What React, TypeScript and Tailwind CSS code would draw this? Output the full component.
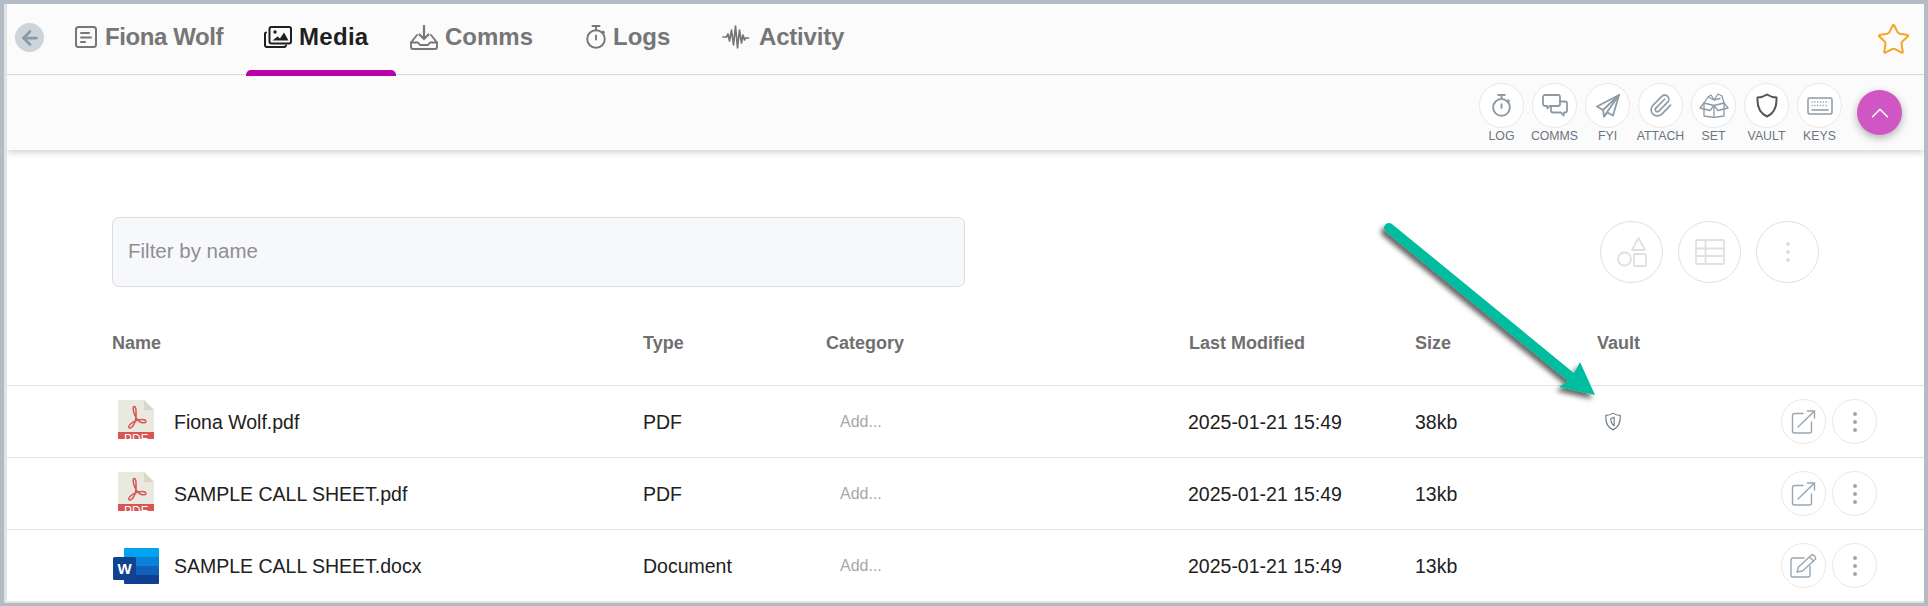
import { ArrowLeft, ChevronUp, Paperclip, Star } from "lucide-react";
import type { ReactNode } from "react";

const sans = "font-['Liberation_Sans',Arial,sans-serif]";

function Svg({ w, h, vb, sw = 2, children }: { w: number; h: number; vb?: string; sw?: number; children: ReactNode }) {
  return (
    <svg width={w} height={h} viewBox={vb ?? `0 0 ${w} ${h}`} fill="none" stroke="currentColor" strokeWidth={sw} strokeLinecap="round" strokeLinejoin="round">
      {children}
    </svg>
  );
}

function DocIcon() {
  return (
    <Svg w={22} h={22}>
      <rect x="1" y="1" width="20" height="20" rx="2.5" />
      <path d="M6 7h8M6 11.5h10M6 16h4" />
    </Svg>
  );
}

function MediaIcon() {
  return (
    <Svg w={28} h={22} sw={2}>
      <path d="M2 6.5A1.5 1.5 0 0 0 1 8v11a2 2 0 0 0 2 2h17a2 2 0 0 0 2-1.5" />
      <rect x="5.5" y="1" width="21.5" height="16.5" rx="2" />
      <circle cx="11" cy="6" r="1.7" fill="currentColor" stroke="none" />
      <path d="M8.5 14.5l5-4 2.5 2 4-6 4.500 8z" fill="currentColor" stroke="none" />
    </Svg>
  );
}

function InboxIcon() {
  return (
    <Svg w={28} h={25} sw={1.9}>
      <path d="M14 1v13M9.500 9.500l4.500 4.500 4.500-4.500" strokeWidth="2.200" />
      <path d="M7 10l-6 7.500V22a2 2 0 0 0 2 2h22a2 2 0 0 0 2-2v-4.500L21 10" />
      <path d="M1 17.500h7l2 2.500h8l2-2.500h7" />
    </Svg>
  );
}

function StopwatchIcon({ w = 20, h = 24, sw = 1.9 }: { w?: number; h?: number; sw?: number }) {
  return (
    <Svg w={w} h={h} vb="0 0 20 24" sw={sw}>
      <circle cx="10" cy="14" r="8.800" />
      <path d="M6.500 1h7M10 1v4M17 6.500l1 1" />
      <path d="M10 10.500v4" />
    </Svg>
  );
}

function Waveform() {
  return (
    <Svg w={30} h={24} sw={1.7}>
      <path d="M1 12h3.500l1.500-3 1.500 7 2-11 2 15 2-19 2 22 2-18 2 13 1.500-8 1.500 5 1-2h3" />
    </Svg>
  );
}

function CommentsIcon() {
  return (
    <Svg w={26} h={24} sw={1.8}>
      <path d="M3 1h13a2 2 0 0 1 2 2v7a2 2 0 0 1-2 2H7.500l-2 2.500-.5-2.500H3a2 2 0 0 1-2-2V3a2 2 0 0 1 2-2z" />
      <path d="M18 7.500h5a2 2 0 0 1 2 2v7a2 2 0 0 1-2 2h-1l-.5 3-2.500-3h-8a2 2 0 0 1-2-2V12" />
    </Svg>
  );
}

function PlaneIcon() {
  return (
    <Svg w={24} h={24} sw={1.8}>
      <path d="M23 1L1 12.500l6 3.500 1 6.500 3.500-4 5.500 3z" />
      <path d="M23 1L7 16M23 1L8 22.500" />
    </Svg>
  );
}

function BoxIcon() {
  return (
    <Svg w={30} h={25} sw={1.3}>
      <path d="M5 10v13l10 1.500 10-1.500V10" />
      <path d="M5 10l10 2.500L25 10M15 12.500v12" />
      <path d="M5 10L1 15l10 2.500 4-5 4 5L29 15l-4-5" />
      <path d="M5 10l4-6 6 3 6-1.500M15 7l-3-5-3 2M15 7l4-6 4 2 2 7" />
    </Svg>
  );
}

function ShieldIcon({ w = 22, h = 25, sw = 2 }: { w?: number; h?: number; sw?: number }) {
  return (
    <Svg w={w} h={h} vb="0 0 22 25" sw={sw}>
      <path d="M11 1.500c3 2 6 3 9.500 3 .5 9-2 15.500-9.500 19-7.500-3.500-10-10-9.500-19 3.500 0 6.500-1 9.500-3z" />
    </Svg>
  );
}

function VaultMark() {
  return (
    <Svg w={18} h={19} vb="0 0 22 25" sw={1.500}>
      <path d="M11 1.500c3 2 6 3 9.500 3 .5 9-2 15.500-9.500 19-7.500-3.500-10-10-9.500-19 3.500 0 6.500-1 9.500-3z" />
      <path d="M12.500 7L8 9c0 4 1.500 7 4.500 9z" />
    </Svg>
  );
}

function KeyboardIcon() {
  return (
    <Svg w={26} h={18} sw={1.2}>
      <rect x="1" y="1" width="24" height="16" rx="1.5" strokeWidth="1.500" />
      <path d="M4.500 5h17M4.500 8.500h17" strokeDasharray="1.200 1.600" strokeLinecap="butt" strokeWidth="1.600" />
      <path d="M5 13h16" strokeWidth="1.600" />
    </Svg>
  );
}

function ShapesIcon() {
  return (
    <Svg w={30} h={30} sw={1.8}>
      <path d="M21.500 1L28 13H15z" />
      <circle cx="7.500" cy="22" r="6.500" />
      <rect x="17" y="17" width="12" height="12" rx="1" />
    </Svg>
  );
}

function TableIcon() {
  return (
    <Svg w={30} h={26} sw={1.8}>
      <rect x="1" y="1" width="28" height="24" rx="1.500" />
      <path d="M1 9.500h28M1 17h28M10.500 1v24" />
    </Svg>
  );
}

function Dots({ size = 3.2, color = "bg-[#98a6b2]" }: { size?: number; color?: string }) {
  const dot = <span className={`rounded-full ${color}`} style={{ width: size, height: size }} />;
  return (
    <span className="flex flex-col items-center gap-[4px]">
      {dot}
      {dot}
      {dot}
    </span>
  );
}

function OpenIcon() {
  return (
    <Svg w={25} h={24} sw={1.400}>
      <path d="M12 3.500H3.500a2 2 0 0 0-2 2V21a2 2 0 0 0 2 2h15a2 2 0 0 0 2-2v-9" />
      <path d="M7 17L23.500 1M16.500 1h7v7" />
    </Svg>
  );
}

function EditIcon() {
  return (
    <Svg w={27} h={24} sw={1.400}>
      <path d="M14 4H3a2 2 0 0 0-2 2v15.500a1.500 1.500 0 0 0 1.500 1.500H18a2 2 0 0 0 2-2v-9" />
      <path d="M7 18l1.500-5L21 1.500a2 2 0 0 1 3 0l1 1a2 2 0 0 1 0 3L12.500 17z" />
      <path d="M19.500 3l4 4" />
    </Svg>
  );
}

function PdfIcon() {
  return (
    <svg width="36" height="39" viewBox="0 0 36 39" className="mb-[4px]">
      <path d="M0 0h26l10 10v29H0z" fill="#e9e9e0" />
      <path d="M26 0l10 10H26z" fill="#d9d7ca" />
      <rect y="32" width="36" height="7" fill="#d75555" />
      <text x="18" y="43" textAnchor="middle" fontSize="12" fill="#fff" fontFamily="Liberation Sans">PDF</text>
      <path
        d="M16 6.500c-1.500 0-1 6 2 11 2.500 4 6 6 9 5 2-1 .5-3-3-3-5 0-11 3-13 6.500-1 2 1.500 3 3.500 .5 3-3.500 4-9.500 3.500-15.500 0-3-1-4.500-2-4.500z"
        fill="none"
        stroke="#d75555"
        strokeWidth="1.500"
      />
    </svg>
  );
}

function WordIcon() {
  return (
    <svg width="46" height="36" viewBox="0 0 46 36">
      <path d="M11 1a1 1 0 0 1 1-1h33a1 1 0 0 1 1 1v8H11z" fill="#03a4ee" />
      <rect x="11" y="9" width="35" height="9" fill="#0a80d6" />
      <rect x="11" y="18" width="35" height="9" fill="#0f62b8" />
      <path d="M11 27h35v8a1 1 0 0 1-1 1H12a1 1 0 0 1-1-1z" fill="#103f91" />
      <rect y="9" width="23" height="23" rx="1.500" fill="#11428f" />
      <text x="11.500" y="26" textAnchor="middle" fontSize="15" fontWeight="700" fill="#fff" fontFamily="Liberation Sans">W</text>
    </svg>
  );
}

function Tab({ icon, label, active, box, gap }: { icon: ReactNode; label: string; active?: boolean; box: string; gap: string }) {
  return (
    <div className={`relative flex h-[71px] shrink-0 items-center pb-[5px] ${box} ${gap} ${active ? "text-[#1f1f1f]" : "text-[#767676]"}`}>
      {icon}
      <span className="text-[24px] font-bold leading-none">{label}</span>
      {active && <div className="absolute -bottom-px left-0 right-0 h-[6px] rounded-t-[5px] bg-[#b900a9]" />}
    </div>
  );
}

function Tool({ icon, label, dark }: { icon: ReactNode; label: string; dark?: boolean }) {
  return (
    <div className="flex w-[53px] flex-col items-center">
      <div className={`flex h-[45px] w-[45px] items-center justify-center rounded-full border border-[#e8e8e8] bg-white ${dark ? "text-[#555555]" : "text-[#8c9aa5]"}`}>
        {icon}
      </div>
      <span className="mt-[1px] whitespace-nowrap text-[12.3px] leading-[14px] text-[#6c757d]">{label}</span>
    </div>
  );
}

function Row({ icon, name, type, action, vault, size }: { icon: ReactNode; name: string; type: string; action: ReactNode; vault?: boolean; size: string }) {
  return (
    <div className="flex h-[72px] items-center border-t border-[#e2e2e2] pl-[105px] text-[19.5px] text-[#212121]">
      <div className="mr-[14px] flex w-[48px] shrink-0 justify-center">{icon}</div>
      <div className="w-[469px] shrink-0 pt-[2px]">{name}</div>
      <div className="w-[183px] shrink-0 pt-[2px]">{type}</div>
      <div className="w-[362px] shrink-0 pl-[14px] text-[16px] text-[#a8a8a8]">Add...</div>
      <div className="w-[227px] shrink-0 pt-[2px]">2025-01-21 15:49</div>
      <div className="w-[182px] shrink-0 pt-[2px]">{size}</div>
      <div className="flex w-[184px] shrink-0 items-center pl-[7px] text-[#6f7880]">{vault && <VaultMark />}</div>
      <div className="flex gap-[6px]">
        <div className="flex h-[45px] w-[45px] items-center justify-center rounded-full border border-[#e8e8e8] text-[#98a6b2]">{action}</div>
        <div className="flex h-[45px] w-[45px] items-center justify-center rounded-full border border-[#e8e8e8]">
          <Dots size={4} />
        </div>
      </div>
    </div>
  );
}

export default function App() {
  return (
    <div className={`h-[606px] w-[1928px] overflow-hidden bg-[#b3bcc4] pb-[3px] pl-[4px] pr-[4px] pt-[4px] ${sans}`}>
      <div className="relative h-full overflow-hidden border-b-[2px] border-l-[3px] border-[#e0e3e6] bg-white">
        <header className="relative bg-[#fbfbfb] shadow-[0_3px_6px_rgba(0,0,0,0.16)]">
          <div className="flex h-[71px] items-start border-b border-[#d6d6d6]">
            <div className="ml-[8px] mt-[19px] flex h-[29px] w-[29px] items-center justify-center rounded-full bg-[#cdd5da] text-[#8a9aa5]">
              <ArrowLeft size={22} strokeWidth={3} />
            </div>
            <Tab box="ml-[31px] w-[171px] tracking-[-0.4px]" gap="gap-[8px]" icon={<DocIcon />} label="Fiona Wolf" />
            <Tab box="w-[150px] pl-[18px] tracking-[0.3px]" gap="gap-[7px]" active icon={<MediaIcon />} label="Media" />
            <Tab box="w-[190px] pl-[14px]" gap="gap-[7px]" icon={<InboxIcon />} label="Comms" />
            <Tab box="w-[136px]" gap="gap-[7px]" icon={<StopwatchIcon />} label="Logs" />
            <Tab box="w-[140px] tracking-[-0.2px]" gap="gap-[7px]" icon={<Waveform />} label="Activity" />
            <div className="ml-auto mr-[13px] mt-[18px] text-[#f5a623]">
              <Star size={35} strokeWidth={1.4} />
            </div>
          </div>
          <div className="flex h-[75px] items-start justify-end pr-[22px] pt-[8px]">
            <div className="flex">
              <Tool icon={<StopwatchIcon w={19} h={23} sw={2} />} label="LOG" />
              <Tool icon={<CommentsIcon />} label="COMMS" />
              <Tool icon={<PlaneIcon />} label="FYI" />
              <Tool icon={<Paperclip size={25} strokeWidth={1.6} />} label="ATTACH" />
              <Tool icon={<BoxIcon />} label="SET" />
              <Tool dark icon={<ShieldIcon />} label="VAULT" />
              <Tool icon={<KeyboardIcon />} label="KEYS" />
            </div>
            <div className="ml-[11px] mt-[7px] flex h-[45px] w-[45px] items-center justify-center rounded-full bg-[#cf56c3] text-white shadow-[0_3px_8px_rgba(0,0,0,0.3)]">
              <ChevronUp size={30} strokeWidth={1.2} />
            </div>
          </div>
        </header>

        <main className="pt-[67px]">
          <div className="flex items-center pl-[105px]">
            <input
              placeholder="Filter by name"
              className="h-[70px] w-[853px] rounded-[7px] border border-[#dcdcdc] bg-[#f7f8fc] px-[15px] pb-[2px] text-[20.5px] outline-none placeholder:text-[#8f8f8f]"
            />
            <div className="ml-[635px] flex gap-[15px] text-[#e0e0e0]">
              <div className="flex h-[62px] w-[63px] items-center justify-center rounded-full border border-[#e0e0e0]">
                <ShapesIcon />
              </div>
              <div className="flex h-[62px] w-[63px] items-center justify-center rounded-full border border-[#e0e0e0]">
                <TableIcon />
              </div>
              <div className="flex h-[62px] w-[63px] items-center justify-center rounded-full border border-[#e0e0e0]">
                <Dots size={4} color="bg-[#e0e0e0]" />
              </div>
            </div>
          </div>

          <div className="mt-[14px] flex h-[84px] items-center pl-[105px] text-[18px] font-bold text-[#6f6f6f]">
            <div className="w-[531px] shrink-0">Name</div>
            <div className="w-[183px] shrink-0">Type</div>
            <div className="w-[363px] shrink-0">Category</div>
            <div className="w-[226px] shrink-0">Last Modified</div>
            <div className="w-[182px] shrink-0">Size</div>
            <div>Vault</div>
          </div>

          <Row icon={<PdfIcon />} name="Fiona Wolf.pdf" type="PDF" size="38kb" vault action={<OpenIcon />} />
          <Row icon={<PdfIcon />} name="SAMPLE CALL SHEET.pdf" type="PDF" size="13kb" action={<OpenIcon />} />
          <Row icon={<WordIcon />} name="SAMPLE CALL SHEET.docx" type="Document" size="13kb" action={<EditIcon />} />
        </main>

        {/* annotation arrow */}
        <svg className="pointer-events-none absolute left-[1369px] top-[215px]" width="260" height="200" viewBox="0 0 260 200">
          <defs>
            <filter id="arrowShadow" x="-20%" y="-20%" width="140%" height="140%">
              <feDropShadow dx="-3" dy="4" stdDeviation="2.500" floodColor="#000" floodOpacity="0.6" />
            </filter>
          </defs>
          <g filter="url(#arrowShadow)">
            <path d="M13 9 L195 158" stroke="#00bd9f" strokeWidth="10" strokeLinecap="round" />
            <path d="M204 143 L219 176 L183 168 L195 160 Z" fill="#00bd9f" />
          </g>
        </svg>
      </div>
    </div>
  );
}
